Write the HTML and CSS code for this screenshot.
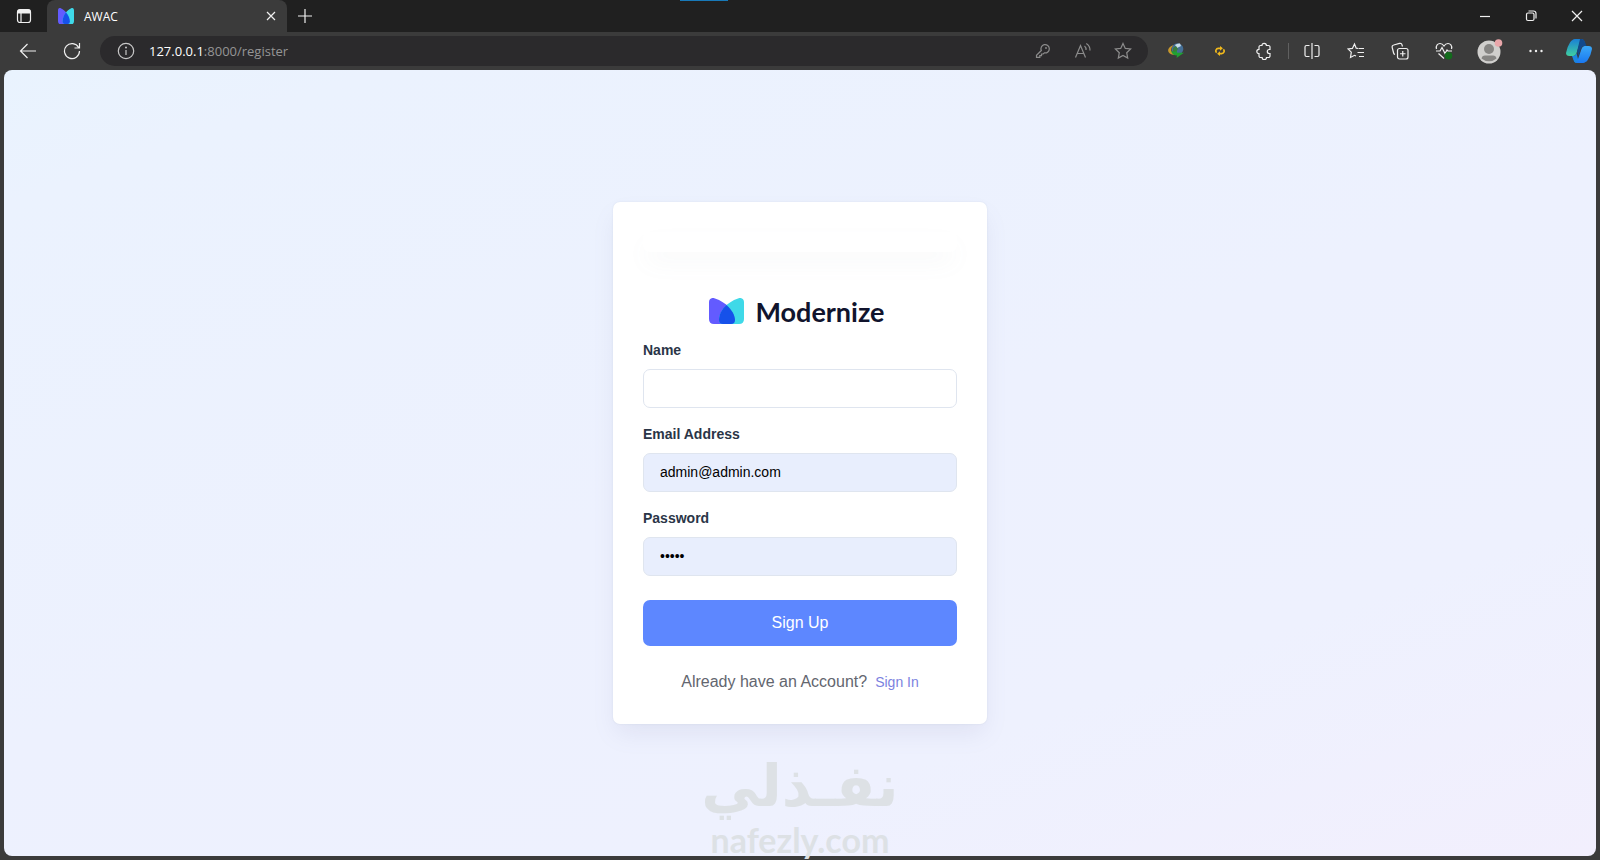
FILE: index.html
```html
<!DOCTYPE html>
<html lang="en">
<head>
    <meta charset="UTF-8">
    <meta name="viewport" content="width=device-width, initial-scale=1.0">
    <title>AWAC</title>
    <link rel="stylesheet" href="styles.css">
</head>
<body>
    <div class="browser">
        <div class="titlebar">
            <button class="tab-actions" aria-label="Tab actions">
                <svg width="16" height="16" viewBox="0 0 16 16"><rect x="1.500" y="1.500" width="13" height="13" rx="2.500" class="line"/><path d="M1.500 5.500V3A1.500 1.500 0 0 1 3 1.500h10A1.500 1.500 0 0 1 14.500 3v2.500z" class="solid"/><path d="M5 5v9.500" class="line"/></svg>
            </button>
            <div class="tab">
                <svg class="favicon" width="16" height="16" viewBox="0 0 35 26" preserveAspectRatio="none"><use href="#mark"/></svg>
                <span class="tab-title">AWAC</span>
                <button class="tab-close" aria-label="Close tab">
                    <svg width="10" height="10" viewBox="0 0 10 10"><path d="M1 1l8 8M9 1L1 9" class="line"/></svg>
                </button>
            </div>
            <button class="new-tab" aria-label="New tab">
                <svg width="14" height="14" viewBox="0 0 14 14"><path d="M7 0v14M0 7h14" class="line"/></svg>
            </button>
            <div class="window-controls">
                <button aria-label="Minimize"><svg width="12" height="12" viewBox="0 0 12 12"><path d="M1 6.500h10" class="line"/></svg></button>
                <button aria-label="Restore"><svg width="12" height="12" viewBox="0 0 12 12"><rect x="1.500" y="3" width="7.500" height="7.500" rx="1.500" class="line"/><path d="M3.500 1h5A2.500 2.500 0 0 1 11 3.500v5" class="line"/></svg></button>
                <button aria-label="Close"><svg width="12" height="12" viewBox="0 0 12 12"><path d="M1 1l10 10M11 1L1 11" class="line"/></svg></button>
            </div>
            <span class="loading-bar"></span>
        </div>

        <div class="toolbar">
            <button class="tool" aria-label="Back">
                <svg width="18" height="18" viewBox="0 0 18 18"><path d="M17 9H1.500M8.500 2L1.500 9l7 7" class="line"/></svg>
            </button>
            <button class="tool" aria-label="Reload">
                <svg width="18" height="18" viewBox="0 0 18 18"><path d="M15.600 5.500A7.500 7.500 0 1 0 16.500 9M16.500 1v5h-5" class="line"/></svg>
            </button>
            <div class="address">
                <button class="site-info" aria-label="Site information">
                    <svg width="18" height="18" viewBox="0 0 18 18"><circle cx="9" cy="9" r="7.700" class="line"/><path d="M9 8v5" class="line"/><circle cx="9" cy="5.500" r="1" class="solid"/></svg>
                </button>
                <span class="url"><b>127.0.0.1</b>:8000/register</span>
                <button class="dim" aria-label="Saved passwords">
                    <svg width="16" height="16" viewBox="0 0 16 16"><path d="M6.300 7.500A4.200 4.200 0 1 1 9.400 9.900L8.200 11H6.500v1.700H4.800v1.700H1.500v-2.200z" class="line"/><circle cx="11" cy="5" r=".9" class="solid"/></svg>
                </button>
                <button class="dim" aria-label="Read aloud">
                    <svg width="18" height="18" viewBox="0 0 18 18"><path d="M1.500 15.500L6.500 3.500l5 12M3.200 11.500h6.700M10.500 4a4.500 4.500 0 0 1 1.500 4M12.300 1.500a7.800 7.800 0 0 1 3.700 7" class="line"/></svg>
                </button>
                <button class="dim" aria-label="Add to favorites">
                    <svg width="18" height="18" viewBox="0 0 18 18"><path d="M9 1.500l2.300 4.900 5.300.6-3.900 3.700 1 5.400L9 13.500l-4.700 2.600 1-5.400L1.400 7l5.300-.6z" class="line"/></svg>
                </button>
            </div>
            <button class="tool" aria-label="Download manager">
                <svg width="18" height="18" viewBox="0 0 18 18"><circle cx="10.500" cy="7" r="5.800" fill="#456f96"/><path d="M8 3a6 6 0 0 1 5-1.500l1 2.500-4 2z" fill="#c6dbe8"/><path d="M6 6l3-2 2 3-2 3H6z" fill="#3b7d3b"/><path d="M6.500 3C2 4.500.5 7.500 1.500 10c1 2 3.500 3 7 3l-1-2.500C5.500 10.500 4 9.500 4.200 8c0-2 1-3.500 2.300-5z" fill="#c9982c"/><path d="M4 9l4 1 2-1.500v2.200h7L9.500 16l.5-2.500C7 13.500 5 12 4 9z" fill="#1fa033"/></svg>
            </button>
            <button class="tool" aria-label="Sync extension">
                <svg width="10" height="10" viewBox="0 0 12 12"><path d="M7 2.800H4A3 3 0 0 0 2 8M5 9.200h3A3 3 0 0 0 10 4" fill="none" stroke="#f1b91c" stroke-width="2"/><path d="M6 0l3.500 2.800L6 5.600zM6 6.400v5.600L2.500 9.200z" fill="#f1b91c"/></svg>
            </button>
            <button class="tool" aria-label="Extensions">
                <svg width="18" height="18" viewBox="0 0 18 18"><path d="M5.500 3.500H7a2.200 2.200 0 0 1 4.400 0h2A1.500 1.500 0 0 1 15 5v2.500h-.7a2 2 0 0 0 0 4h.7V14a1.500 1.500 0 0 1-1.500 1.500h-2a2.200 2.200 0 0 1-4.400 0H5.500A1.500 1.500 0 0 1 4 14v-2.300a2.200 2.200 0 0 1 0-4.400V5a1.500 1.500 0 0 1 1.500-1.500z" class="line"/></svg>
            </button>
            <span class="separator"></span>
            <button class="tool" aria-label="Split screen">
                <svg width="18" height="18" viewBox="0 0 18 18"><path d="M9 1v16M6.500 3.500H3.500A1.500 1.500 0 0 0 2 5v8a1.500 1.500 0 0 0 1.500 1.500h3M11.500 3.500h3A1.500 1.500 0 0 1 16 5v8a1.500 1.500 0 0 1-1.500 1.500h-3" class="line"/></svg>
            </button>
            <button class="tool" aria-label="Favorites">
                <svg width="18" height="18" viewBox="0 0 18 18"><path d="M11 6.500L9.200 6.200 7.500 2 5.400 6.400l-4.400.5 3.300 3.300-.8 5.300 4-2.200 1.500.7M11.500 6.500h5.500M10.500 10.500h6.500M12 14.500h5" class="line"/></svg>
            </button>
            <button class="tool" aria-label="Collections">
                <svg width="18" height="18" viewBox="0 0 18 18"><rect x="6.500" y="6.500" width="10.500" height="10.500" rx="2" class="line"/><path d="M11.750 9v5.500M9 11.750h5.500M4 12.500A2 2 0 0 1 2.600 11L1.200 5.500A2 2 0 0 1 2.700 3L8.500 1.400A2 2 0 0 1 11 2.800l.5 1.700" class="line"/></svg>
            </button>
            <button class="tool" aria-label="Browser essentials">
                <svg width="18" height="18" viewBox="0 0 18 18"><path d="M1.500 7C.5 3.500 3 1.500 5 1.500c2 0 3.200 1.200 4 2.500.8-1.300 2-2.500 4-2.500s4.500 2 3.500 5.500M3.500 11.500L9 16.500M1 9h4l2-3.500 3 6L12 8l1 1h4" class="line"/><circle cx="13.500" cy="13.700" r="3.800" fill="#126c1c"/></svg>
            </button>
            <button class="tool profile" aria-label="Profile">
                <svg width="26" height="26" viewBox="0 0 26 26"><circle cx="12" cy="14" r="11.500" fill="#d0cfcd"/><circle cx="12" cy="11" r="5" fill="#868583"/><path d="M4.500 20.500Q5 17.500 8 17.500h8q3 0 3.500 3A11.500 11.500 0 0 1 4.500 20.500z" fill="#868583"/><circle cx="21.500" cy="5" r="3.800" fill="#e9a6aa"/></svg>
            </button>
            <button class="tool" aria-label="Settings and more">
                <svg width="16" height="4" viewBox="0 0 16 4"><circle cx="2.500" cy="2" r="1.200" class="solid"/><circle cx="8" cy="2" r="1.200" class="solid"/><circle cx="13.500" cy="2" r="1.200" class="solid"/></svg>
            </button>
            <button class="tool copilot" aria-label="Copilot">
                <svg width="26" height="24" viewBox="0 0 26 24">
                    <defs>
                        <linearGradient id="teal" x1="0" y1="0" x2="0" y2="1"><stop offset="0" stop-color="#1a7fd6"/><stop offset="1" stop-color="#3fcfa0"/></linearGradient>
                        <linearGradient id="blue" x1="0" y1="0" x2="0" y2="1"><stop offset="0" stop-color="#3aa8f8"/><stop offset="1" stop-color="#1a78f0"/></linearGradient>
                    </defs>
                    <path d="M6.500 1Q7.500 0 9 0h6q2.500 0 3.500 3l-4.500 0-3.500 11Q9.500 17 7 17H3.500Q0 17 0 14 1 8 4 3.500 5 1.500 6.500 1z" fill="url(#teal)"/>
                    <path d="M19.500 23q-1 1-2.500 1h-6q-2.500 0-3.500-4l4.500 0 3.500-10Q16.500 7 19 7h3.500Q26 7 26 10q-1 6-4 10.500-1 2-2.500 2.500z" fill="url(#blue)"/>
                    <path d="M14 0h1.500q2.500 0 3.500 3l1.500 4H18q-2 0-3 2.500L12.500 17 11 13z" fill="#12498c"/>
                    <path d="M7 17q2.500 0 3.500-3l1.500 6-.5 1.500q-.5 1.500-1.500 2.500-2-.5-2.500-3L6 17z" fill="#1b86e0"/>
                </svg>
            </button>
        </div>

        <main class="page">
            <section class="card">
                <div class="alert-card"></div>
                <a href="#" class="logo">
                    <svg width="35" height="26" viewBox="0 0 35 26">
                        <g id="mark">
                            <path d="M0 4C0 1 3-1 6 .4 17 4 26 13 26 22q0 4-4 4H5q-5 0-5-5z" fill="#635bff"/>
                            <path d="M35 4c0-3-3-5-6-3.600C18 4 10 13 10 22q0 4 4 4h16q5 0 5-5z" fill="#3fd9e8"/>
                            <path d="M17.500 7C22.500 11.500 26 17 26 22q0 4-4 4h-8q-4 0-4-4c0-5 2.500-10.500 7.500-15z" fill="#1651ea"/>
                        </g>
                    </svg>
                    <span>Modernize</span>
                </a>
                <form>
                    <div class="field">
                        <label for="name">Name</label>
                        <input type="text" id="name" name="name">
                    </div>
                    <div class="field">
                        <label for="email">Email Address</label>
                        <input type="email" id="email" name="email" class="autofilled" value="admin@admin.com">
                    </div>
                    <div class="field">
                        <label for="password">Password</label>
                        <input type="password" id="password" name="password" class="autofilled" value="admin">
                    </div>
                    <button type="submit" class="btn-primary">Sign Up</button>
                    <div class="signin">
                        <p>Already have an Account?</p>
                        <a href="#">Sign In</a>
                    </div>
                </form>
            </section>
        </main>

        <div class="watermark">
            <span class="watermark-ar" lang="ar" dir="rtl">نفـذلي</span>
            <span class="watermark-en">nafezly.com</span>
        </div>
    </div>
</body>
</html>
```
FILE: styles.css
```css
:root {
    --titlebar: #202020;
    --toolbar: #3b3b3b;
    --address: #2b2a2c;
    --primary: #5d87ff;
    --border: #dfe5ef;
    --radius: 7px;
    --ui-font: "Open Sans", "Noto Sans", sans-serif;
}

* {
    box-sizing: border-box;
    margin: 0;
    padding: 0;
}

body {
    font-family: "Liberation Sans", Arial, sans-serif;
    background: var(--toolbar);
}

button {
    display: flex;
    align-items: center;
    justify-content: center;
    border: none;
    background: none;
    color: #f0f0f0;
    cursor: pointer;
}

.line {
    fill: none;
    stroke: currentColor;
    stroke-width: 1.2;
}

.solid {
    fill: currentColor;
}

.browser {
    position: relative;
    display: flex;
    flex-direction: column;
    min-height: 100vh;
    overflow: hidden;
}

/* Tab strip */
.titlebar {
    position: relative;
    display: flex;
    height: 32px;
    background: var(--titlebar);
}

.tab-actions {
    width: 47px;
}

.tab {
    display: flex;
    align-items: center;
    width: 240px;
    padding: 0 8px 0 11px;
    border-radius: 8px 8px 0 0;
    background: var(--toolbar);
}

.tab-title {
    flex: 1;
    margin-left: 10px;
    font: 12px var(--ui-font);
    color: #fff;
}

.tab-close {
    width: 16px;
    height: 16px;
}

.new-tab {
    width: 36px;
}

.window-controls {
    display: flex;
    margin-left: auto;
}

.window-controls button {
    width: 46px;
}

.loading-bar {
    position: absolute;
    top: 0;
    left: 680px;
    width: 48px;
    height: 1px;
    background: #1879b8;
}

/* Toolbar */
.toolbar {
    display: flex;
    align-items: center;
    height: 38px;
    padding-left: 6px;
    background: var(--toolbar);
}

.tool {
    width: 44px;
    height: 32px;
}

.profile {
    width: 48px;
}

.copilot {
    width: 42px;
}

.address {
    display: flex;
    flex: 1;
    align-items: center;
    height: 30px;
    margin: 0 6px;
    padding: 0 5px 0 6px;
    border-radius: 15px;
    background: var(--address);
}

.address button {
    width: 40px;
    height: 30px;
}

.address .site-info {
    color: #c8c8c8;
}

.address .dim {
    color: #8c8c8c;
}

.url {
    flex: 1;
    margin-left: 3px;
    font: 13px var(--ui-font);
    color: #959595;
}

.url b {
    font-weight: 400;
    color: #fff;
}

.separator {
    width: 1px;
    height: 16px;
    margin: 0 1px 0 2px;
    background: #606060;
}

/* Register page */
.page {
    display: flex;
    flex: 1;
    align-items: center;
    justify-content: center;
    margin: 0 4px 4px;
    border-radius: 8px;
    background: linear-gradient(160deg, #e9f3fe, #ebf2fe 10%, #edf1fe 50%, #eef1fe 75%, #f2effd);
}

.card {
    width: 374px;
    padding: 30px;
    border-radius: var(--radius);
    background: #fff;
    box-shadow: rgba(145, 158, 171, 0.2) 0 0 2px 0, rgba(125, 130, 171, 0.14) 0 12px 24px -4px;
}

.alert-card {
    height: 20px;
    margin-bottom: 30px;
    border-radius: var(--radius);
    box-shadow: rgba(145, 158, 171, 0.08) 0 12px 24px -4px;
}

.logo {
    display: flex;
    align-items: center;
    justify-content: center;
    gap: 11px;
    height: 58px;
    padding-right: 6px;
    font: 700 27px Lato, sans-serif;
    color: #11142d;
    text-decoration: none;
}

.field {
    margin-bottom: 16px;
}

.field label {
    display: block;
    margin-bottom: 8px;
    font-size: 14px;
    font-weight: 700;
    line-height: 21px;
    color: #2a3547;
}

.field input {
    display: block;
    width: 100%;
    height: 39px;
    padding: 0 16px 2px;
    border: 1px solid var(--border);
    border-radius: var(--radius);
    background: #fff;
    font: 14px "Liberation Sans", Arial, sans-serif;
    color: #000;
}

.field .autofilled {
    background: #e8eefd;
}

.btn-primary {
    width: 100%;
    height: 46px;
    margin: 24px 0;
    border-radius: var(--radius);
    background: var(--primary);
    font: 16px "Liberation Sans", Arial, sans-serif;
    color: #fff;
}

.signin {
    display: flex;
    align-items: center;
    justify-content: center;
    gap: 8px;
    line-height: 24px;
}

.signin p {
    font-size: 16px;
    color: #63666f;
}

.signin a {
    font-size: 14px;
    color: #7b82e0;
    text-decoration: none;
}

/* Site watermark laid over the window */
.watermark {
    position: absolute;
    bottom: 0;
    left: 50%;
    display: flex;
    flex-direction: column;
    align-items: center;
    transform: translateX(-50%);
    color: #dde1e5;
    pointer-events: none;
}

.watermark-ar {
    font: 700 58px/68px "DejaVu Sans", sans-serif;
}

.watermark-en {
    font: 700 34px/40px Lato, sans-serif;
}
```
